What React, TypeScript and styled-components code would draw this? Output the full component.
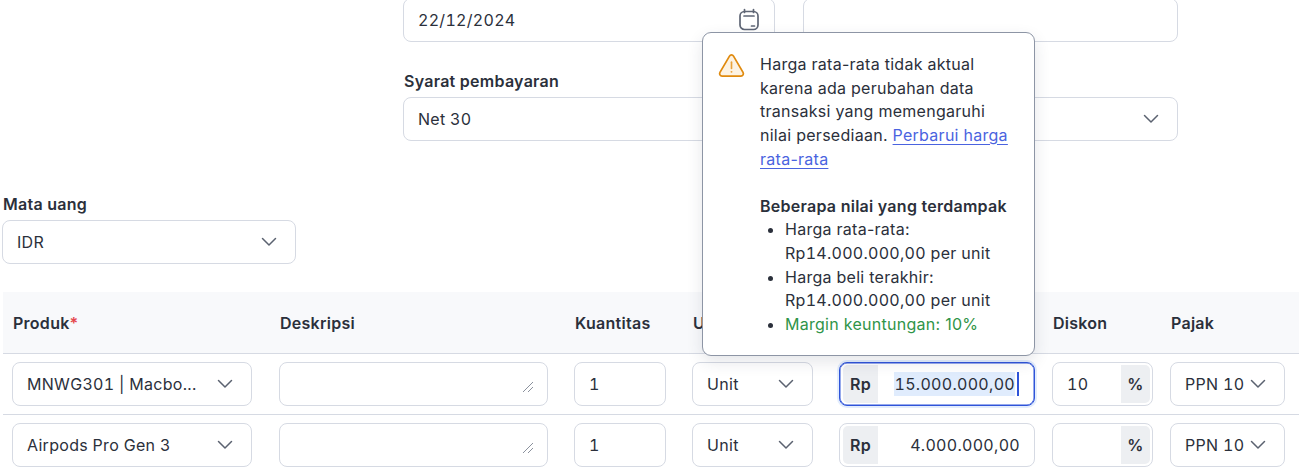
import React from "react";
import styled, { createGlobalStyle } from "styled-components";

const Global = createGlobalStyle`
  html, body { margin: 0; padding: 0; background: #fff; }
  body { font-family: Inter, "Liberation Sans", sans-serif; color: #2b303b; font-size: 16px; overflow: hidden; letter-spacing: 0.27px; }
  #root { width: 1299px; height: 471px; overflow: hidden; }
`;

const Page = styled.div`
  position: relative;
  width: 1299px;
  height: 471px;
  overflow: hidden;
`;

const TopForm = styled.section`
  display: grid;
  grid-template-columns: 372px 375px;
  column-gap: 28px;
  row-gap: 27px;
  margin: -2px 0 0 403px;
`;

const Field = styled.div`
  display: flex;
  flex-direction: column;
  gap: 4px;
`;

const Label = styled.label`
  font-size: 16px;
  line-height: 24px;
  font-weight: 600;
  color: #2b303b;
  padding-left: 1px;
  height: 24px;
`;

const Box = styled.div`
  box-sizing: border-box;
  height: 44px;
  display: flex;
  align-items: center;
  justify-content: space-between;
  border: 1px solid #d6dae3;
  border-radius: 8px;
  background: #fff;
  padding: 0 16px 0 14px;
  font-size: 16px;
  font-variant-numeric: tabular-nums;
  letter-spacing: 0.3px;
  white-space: nowrap;
  overflow: hidden;
`;

const CurrencyWrap = styled.div`
  width: 294px;
  margin: 51px 0 0 2px;
`;

const Table = styled.div`
  margin: 28px 0 0 3px;
`;

const HeadRow = styled.div`
  display: grid;
  grid-template-columns: 267px 295px 118px 147px 213px 118px 115px;
  height: 61px;
  align-items: center;
  padding-left: 9px;
  background: #f8f9fb;
  border-bottom: 1px solid #d6dae3;
`;

const HeadCell = styled.div`
  font-weight: 600;
  font-size: 16px;
  padding-left: 1px;
  color: #2b303b;
  white-space: nowrap;
`;

const Req = styled.span`
  color: #e5484d;
`;

const Row = styled.div`
  display: grid;
  grid-template-columns: 267px 295px 118px 147px 213px 118px 115px;
  padding: 8px 0 8px 9px;
  border-bottom: 1px solid #d6dae3;
`;

const Cell = styled.div<{ $w: number }>`
  width: ${(p) => p.$w}px;
`;

const NoteBox = styled(Box)`
  position: relative;
`;

const Resizer = styled.svg`
  position: absolute;
  right: 13px;
  top: 18px;
`;

const Addon = styled.span<{ $side: "l" | "r" }>`
  align-self: stretch;
  display: flex;
  align-items: center;
  justify-content: center;
  background: #edeff2;
  font-weight: 600;
  margin: 2px;
  ${(p) => (p.$side === "l" ? "margin-left: 3px; margin-right: 0; width: 35px; border-radius: 5px 0 0 5px;" : "margin-left: 0; width: 29px; border-radius: 0 5px 5px 0;")}
`;

const GroupBox = styled(Box)<{ $focus?: boolean }>`
  padding: 0;
  ${(p) => p.$focus && "border-color: #2f54d9; box-shadow: inset 0 0 0 0.5px #2f54d9, 0 0 0 2px #e3edfd;"}
`;

const GroupValue = styled.span`
  flex: 1;
  text-align: right;
  padding-right: 14px;
`;

const Selected = styled.span`
  background: #e0ecfd;
  line-height: 24px;
  display: inline-block;
`;

const Caret = styled.span`
  display: inline-block;
  width: 2px;
  height: 24px;
  margin-left: 2px;
  background: #2f54d9;
`;

const FocusValue = styled(GroupValue)`
  display: flex;
  align-items: center;
  justify-content: flex-end;
  padding-right: 15px;
`;

const Pct = styled.span`
  flex: 1;
  padding-left: 14px;
`;

const Chevron = () => (
  <svg width="20" height="20" viewBox="0 0 20 20" fill="none" stroke="#5b6270" strokeWidth="1.5" strokeLinecap="round" strokeLinejoin="round" style={{ flex: "none" }}>
    <path d="M3.5 6.5 10 13l6.5-6.5" />
  </svg>
);

const CalendarIcon = () => (
  <svg width="22" height="24" viewBox="0 0 22 24" fill="none" stroke="#5f6675" strokeWidth="1.7" strokeLinecap="round" style={{ flex: "none", marginRight: -2 }}>
    <rect x="2" y="3.5" width="18" height="18" rx="4.5" />
    <path d="M6.5 1.5v3M15.5 1.5v3M6 8h10M13.5 18h3" />
  </svg>
);

const WarningIcon = () => (
  <svg width="27" height="25" viewBox="0 0 28 26" style={{ display: "block" }}>
    <path d="M11.9 3.2 2 20.2c-1 1.8.2 3.8 2.2 3.8h19.6c2 0 3.2-2 2.2-3.8l-9.9-17c-1-1.7-3.2-1.7-4.2 0Z" fill="#fdf3e3" stroke="#e08a0e" strokeWidth="1.8" strokeLinejoin="round" />
    <path d="M14 9.5v6.5" stroke="#e9a23b" strokeWidth="1.7" strokeLinecap="round" />
    <circle cx="14" cy="19.6" r="1" fill="#e9a23b" />
  </svg>
);

const Popover = styled.aside`
  position: absolute;
  left: 702px;
  top: 32px;
  width: 333px;
  height: 324px;
  box-sizing: border-box;
  display: flex;
  gap: 15px;
  padding: 20px 20px 0 15px;
  background: #fff;
  border: 1px solid #8d95a5;
  border-radius: 9px;
  box-shadow: 0 6px 16px rgba(40, 50, 70, 0.12);
  font-size: 16px;
  line-height: 23.64px;
`;

const PopIcon = styled.div`
  flex: none;
  width: 27px;
`;

const PopBody = styled.div`
  flex: 1;
  min-width: 0;
`;

const Para = styled.p`
  margin: 0 0 23.64px;
`;

const Link = styled.a`
  color: #4a63e0;
  text-decoration: underline;
  text-underline-offset: 3px;
`;

const PopTitle = styled.div`
  font-weight: 600;
`;

const PopList = styled.ul`
  margin: 0;
  padding: 0 0 0 25px;
`;

const PopItem = styled.li<{ $green?: boolean }>`
  &::marker { color: #2b303b; }
  ${(p) => p.$green && "color: #2f9448;"}
`;

const Amount = styled.span`
  font-variant-numeric: tabular-nums;
`;

const Note = () => (
  <NoteBox>
    <Resizer width="12" height="12" viewBox="0 0 12 12" fill="none" stroke="#8b919d" strokeWidth="1">
      <path d="M1 11 11 1M6 11l5-5" />
    </Resizer>
  </NoteBox>
);

const Money = ({ focus, value }: { focus?: boolean; value: string }) => (
  <GroupBox $focus={focus}>
    <Addon $side="l">Rp</Addon>
    {focus ? (
      <FocusValue>
        <Selected>{value}</Selected>
        <Caret />
      </FocusValue>
    ) : (
      <GroupValue>{value}</GroupValue>
    )}
  </GroupBox>
);

const Discount = ({ value }: { value?: string }) => (
  <GroupBox>
    <Pct>{value}</Pct>
    <Addon $side="r">%</Addon>
  </GroupBox>
);

const Line = ({ product, focus, money, disc }: { product: string; focus?: boolean; money: string; disc?: string }) => (
  <Row>
    <Cell $w={240}><Box>{product}<Chevron /></Box></Cell>
    <Cell $w={269}><Note /></Cell>
    <Cell $w={92}><Box>1</Box></Cell>
    <Cell $w={121}><Box>Unit<Chevron /></Box></Cell>
    <Cell $w={196}><Money focus={focus} value={money} /></Cell>
    <Cell $w={101}><Discount value={disc} /></Cell>
    <Cell $w={115}><Box>PPN 10<Chevron /></Box></Cell>
  </Row>
);

export default function App() {
  return (
    <Page>
      <Global />
      <TopForm>
        <Box>22/12/2024<CalendarIcon /></Box>
        <Box />
        <Field>
          <Label>Syarat pembayaran</Label>
          <Box>Net 30</Box>
        </Field>
        <Field>
          <Label>&nbsp;</Label>
          <Box>&nbsp;<Chevron /></Box>
        </Field>
      </TopForm>
      <CurrencyWrap>
        <Field>
          <Label>Mata uang</Label>
          <Box>IDR<Chevron /></Box>
        </Field>
      </CurrencyWrap>
      <Table>
        <HeadRow>
          <HeadCell>Produk<Req>*</Req></HeadCell>
          <HeadCell>Deskripsi</HeadCell>
          <HeadCell>Kuantitas</HeadCell>
          <HeadCell>Unit</HeadCell>
          <HeadCell>Harga</HeadCell>
          <HeadCell>Diskon</HeadCell>
          <HeadCell>Pajak</HeadCell>
        </HeadRow>
        <Line product="MNWG301 | Macbo..." focus money="15.000.000,00" disc="10" />
        <Line product="Airpods Pro Gen 3" money="4.000.000,00" />
      </Table>
      <Popover>
        <PopIcon><WarningIcon /></PopIcon>
        <PopBody>
          <Para>
            Harga rata-rata tidak aktual karena ada perubahan data transaksi yang memengaruhi nilai persediaan. <Link>Perbarui harga rata-rata</Link>
          </Para>
          <PopTitle>Beberapa nilai yang terdampak</PopTitle>
          <PopList>
            <PopItem>Harga rata-rata: <Amount>Rp14.000.000,00</Amount> per unit</PopItem>
            <PopItem>Harga beli terakhir: <Amount>Rp14.000.000,00</Amount> per unit</PopItem>
            <PopItem $green>Margin keuntungan: 10%</PopItem>
          </PopList>
        </PopBody>
      </Popover>
    </Page>
  );
}
